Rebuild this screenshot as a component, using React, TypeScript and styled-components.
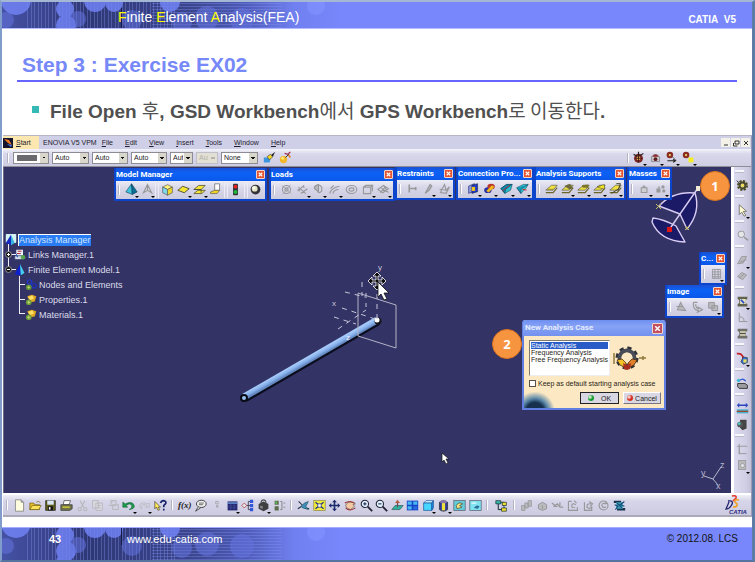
import React from "react";
import styled, { createGlobalStyle } from "styled-components";

const Global = createGlobalStyle`
  * { box-sizing: border-box; }
  html, body { margin: 0; padding: 0; }
  body { font-family: "Liberation Sans", Arial, sans-serif; background: #fff; }
  button, select, input { font: inherit; margin: 0; }
`;

/* ---------- icons ---------- */

const G = "#98979a";
const L = "#bab9be";

const gear = (c: string, hub: string) => (
  <g>
    <circle cx="8" cy="8" r="5.5" fill="none" stroke={c} strokeWidth="2.6" strokeDasharray="2.6 1.7" />
    <circle cx="8" cy="8" r="3.6" fill="none" stroke={c} strokeWidth="2.4" />
    <circle cx="8" cy="8" r="1.8" fill={hub} />
  </g>
);

const support = (extra: React.ReactNode) => (
  <g>
    <path d="M1 10 8 4h7l-5 6z" fill="#f0e040" stroke="#554" strokeWidth=".8" />
    <path d="M1 13h9l5-6" fill="none" stroke="#6b652a" strokeWidth="1.4" />
    {extra}
  </g>
);

const ICONS: Record<string, React.ReactNode> = {
  tetra: <g><path d="M8 1 1 11l8 3z" fill="#3cc4dc" stroke="#135" strokeWidth=".7" /><path d="M8 1l7 10-6 3z" fill="#0c6f93" stroke="#135" strokeWidth=".7" /></g>,
  tetraGray: <g fill="none" stroke={G} strokeWidth="1.4"><path d="M8 2 3 12l5-3 5 3z" fill="#dcdbe2" /><path d="M8 2v7" /></g>,
  cube: <g stroke="#555" strokeWidth=".8"><path d="M2 5l6-3 6 3-6 3z" fill="#fff27a" /><path d="M2 5v7l6 3V8z" fill="#7fd7e8" /><path d="M14 5v7l-6 3V8z" fill="#ecd52c" /></g>,
  sheet: <path d="M1 9l6-5 8 3-6 5z" fill="#f5e634" stroke="#443" strokeWidth="1.1" />,
  sheets: <g stroke="#443" strokeWidth=".9"><path d="M1 13l5-4 9 0-4 4z" fill="#f5e634" /><path d="M1 8l6-5h8l-5 5z" fill="#f5e634" /><path d="M1 8l9 0v4" fill="none" /></g>,
  copyProp: <g stroke="#555" strokeWidth=".8"><path d="M7 1h6v8H7z" fill="#fff" /><path d="M2 11l5-2h6l-3 4H2z" fill="#f2d222" /></g>,
  light: <g><rect x="5" y="1" width="6" height="14" rx="1" fill="#303038" /><circle cx="8" cy="4.5" r="2.4" fill="#e52323" /><circle cx="8" cy="11" r="2.4" fill="#21b83a" /></g>,
  ball: <g><circle cx="8" cy="8" r="6" fill="#33333a" /><circle cx="7" cy="7" r="3.6" fill="#e8e7c8" /><circle cx="6" cy="6" r="1.5" fill="#fff" /></g>,
  load1: <g fill="none" stroke={G} strokeWidth="1.3"><circle cx="8" cy="8" r="5" /><circle cx="8" cy="8" r="2" /><path d="M2 3l12 10M13 2 3 14" strokeWidth=".8" /></g>,
  load2: <g fill="none" stroke={G} strokeWidth="1.4"><path d="M2 10l8-7M6 13l8-6M3 5l9 8M2 8l3 2M9 3l1 3" /></g>,
  load3: <g stroke={G} strokeWidth="1.4"><path d="M3 5q5-5 9 0v5q-4 4-5 0z" fill="none" /><path d="M8 2q-5 1-5 5l5 3z" fill={L} /></g>,
  load4: <g fill="none" stroke={G} strokeWidth="1.4"><path d="M2 13Q4 6 14 4M6 13Q7 8 13 8M3 7l4-4" /></g>,
  load5: <g fill="none" stroke={G} strokeWidth="1.3"><ellipse cx="8" cy="8" rx="6.5" ry="5" /><ellipse cx="8" cy="8" rx="3" ry="2" /></g>,
  load6: <g fill="none" stroke={G} strokeWidth="1.4"><path d="M3 5h9v8H3zM3 5l3-2h8l-2 2M14 3v7" /></g>,
  load7: <g fill="none" stroke={G} strokeWidth="1.3"><path d="M1 8l7-5 6 4-7 5zM5 6l7 5M8 3l6 9M4 12l6-7" /></g>,
  clamp: <path d="M4 3v10M4 8h8M12 6v4" fill="none" stroke={G} strokeWidth="1.9" />,
  slider: <path d="M4 14l6-11 2 2-3 5z" fill={L} stroke={G} strokeWidth="1.5" />,
  iso: <path d="M3 13l5-10 2 7 4-4-4 8zM2 9l10 1" fill="none" stroke={G} strokeWidth="1.4" />,
  conn1: <g><path d="M2 5l7-3v9l-7 3z" fill="#8f9ad8" stroke="#1d2f7e" strokeWidth=".8" /><path d="M6 4l7-2v10l-7 2z" fill="#1d39c8" stroke="#112" strokeWidth=".6" /><path d="M6 6h4v5H6z" fill="#f3c31d" /></g>,
  conn2: <g><ellipse cx="6" cy="10" rx="4.5" ry="3.5" fill="#2430a4" /><ellipse cx="10" cy="5.5" rx="4.5" ry="3.5" fill="#b8342c" /><path d="M4 11l7-7 3 2-7 7z" fill="#f0b91d" /></g>,
  conn3: <g stroke="#145" strokeWidth=".7"><path d="M1 8l7-5h7l-2 7-7 4z" fill="#2bc4d4" /><path d="M1 8l5 6 1-5 8-6-7 0z" fill="#0f86ac" /><path d="M3 11l9-7" stroke="#c22" strokeWidth="1" /></g>,
  conn4: <g stroke="#145" strokeWidth=".7"><path d="M1 7l8-4h6l-3 5-6 6z" fill="#35cddc" /><path d="M1 7l5 7V9l9-6" fill="#159ab8" /><path d="M8 9l5 1" stroke="#c22" strokeWidth="1.200" /></g>,
  sup1: support(<path d="M3 9h8" stroke="#8a822c" />),
  sup2: support(<path d="M4 5l7-3 4 6-5 1z" fill="#6d6a3c" />),
  sup3: support(<path d="M6 4l8-1v4H7z" fill="#7d7426" />),
  sup4: support(<path d="M5 6l9-3v6z" fill="#f5ea22" stroke="#443" strokeWidth=".7" />),
  sup5: support(<path d="M9 2h5l-3 9M3 14l8-5" fill="none" stroke="#3d3a20" strokeWidth="1.1" />),
  mass: <g fill="#d0cfd4" stroke={G} strokeWidth="1.3"><path d="M4 7h7v6H4zM6 7q1-5 3 0" /></g>,
  massPts: <g fill={G}><path d="M3 8h5v5H3z" /><circle cx="11" cy="6" r="2" /><circle cx="12" cy="11" r="2" /><path d="M5 8q1-5 2 0" fill="none" stroke={G} /></g>,
  gridGray: <path d="M3 3h10v11H3zM3 6h10M3 9h10M3 12h10M6 3v11M10 3v11" fill="none" stroke={G} strokeWidth="1.1" />,
  img1: <path d="M3 12l4-9 2 4 4 6zM2 8h7" fill={L} stroke={G} strokeWidth="1.3" />,
  img2: <path d="M3 3h5M3 3q-1 9 6 10l-1 2 6-3-5-3v2Q5 9 6 5" fill="none" stroke={G} strokeWidth="1.4" />,
  img3: <path d="M2 3h7v7H2zM6 7h7v6H6z" fill={L} stroke={G} strokeWidth="1.2" />,
  brush: <g><path d="M1 8h9l-2 6H1z" fill="#3b96e0" /><path d="M5 7l4-3 3 3-4 4z" fill="#f0d528" stroke="#333" strokeWidth=".7" /><path d="M10 5l5-4-3 6z" fill="#222" /></g>,
  wizard: <g><circle cx="5.5" cy="10.5" r="4.5" fill="#f4b62a" /><circle cx="4.5" cy="9" r="1.7" fill="#fdf07c" /><path d="M7 3l4 1 3-3" fill="none" stroke="#a32c58" strokeWidth="1.5" /><path d="M11 4l3 4" stroke="#e0832a" strokeWidth="2" /><path d="M8 8l4-4" stroke="#333" strokeWidth="1.2" /></g>,
  calc1: <g><circle cx="8" cy="9" r="5.5" fill="#7c2424" /><path d="M2 4l5 3M14 3l-5 3M8 1v4" stroke="#222" strokeWidth="1.4" /><circle cx="8" cy="9" r="2.5" fill="#e8b04a" /><path d="M4 9h8M8 5v9" stroke="#301010" /></g>,
  calc2: <g><path d="M3 7q5-5 10 0v6H3z" fill="#c7c6cf" stroke="#666" strokeWidth=".7" /><path d="M4 7q4-6 8 0z" fill="#8c2a2a" /><circle cx="8" cy="10" r="2.3" fill="#5e1c1c" /></g>,
  calc3: <g><circle cx="6" cy="5" r="4" fill="#8a2b22" /><circle cx="6" cy="5" r="1.4" fill="#f3d265" /><path d="M3 12h9M10 10l3 2-3 2" stroke="#222" strokeWidth="1.4" fill="none" /><path d="M8 6l5 5" stroke="#555" /></g>,
  calc4: <g><circle cx="5" cy="5" r="4" fill="#8a2b22" /><circle cx="5" cy="5" r="1.4" fill="#f3d265" /><path d="M8 8h6v6H8z" fill="#f6ee25" /></g>,
  page: <path d="M3 1h7l3 3v11H3zM10 1v3h3" fill="#fffde0" stroke="#777" strokeWidth=".9" />,
  folder: <g stroke="#6b5a10" strokeWidth=".8"><path d="M1 5h5l1 2h6v6H1z" fill="#e8bb28" /><path d="M1 13l3-5h11l-3 5z" fill="#fbe25a" /><path d="M9 4q3-3 5 1" fill="none" /></g>,
  disk: <g><path d="M2 2h12v12H2z" fill="#5c5a1c" stroke="#222" strokeWidth=".8" /><rect x="4" y="2" width="8" height="5" fill="#d8e6f4" /><rect x="5" y="9" width="6" height="5" fill="#111" /><rect x="6" y="10" width="2" height="3" fill="#fff" /></g>,
  printer: <g stroke="#333" strokeWidth=".8"><path d="M5 2h8l-2 5H4z" fill="#fff" /><path d="M1 7h14v5l-3 2H1z" fill="#6f744c" /><path d="M3 10h9" stroke="#f1de35" strokeWidth="1.4" /></g>,
  cut: <g fill="none" stroke={L} strokeWidth="1.4"><path d="M5 2l5 9M11 2l-5 9" /><circle cx="4.5" cy="12.5" r="2" /><circle cx="11.5" cy="12.5" r="2" /></g>,
  copy: <path d="M2 2h7v9H2zM6 5h8v9H6zM8 8h4M8 11h4" fill="#dad9e1" stroke={L} strokeWidth="1.2" />,
  paste: <path d="M5 2h6v6H5zM2 8h7M7 7h7v6H7zM4 4h3" fill="none" stroke={L} strokeWidth="1.3" />,
  undo: <path d="M1 4v6h6l-2-2q5-4 7 0 1 3-3 5 7-1 6-5Q13 2 4 6z" fill="#1da04c" stroke="#0b5c35" strokeWidth=".7" />,
  redo: <path d="M14 5v5H9l2-2Q6 5 4 9l1 3Q0 10 3 6q4-3 9 0z" fill="none" stroke={L} strokeWidth="1" />,
  help: <g><path d="M1 3v9l2-2 2 4 2-1-2-3h3z" fill="#ffe95a" stroke="#222" strokeWidth=".7" /><path d="M8 5q1-3 4-3 4 1 2 4l-2 2v2M12 12v2" fill="none" stroke="#15216b" strokeWidth="2" /></g>,
  bubble: <g><ellipse cx="9" cy="6" rx="6" ry="4.5" fill="#eee" stroke="#333" strokeWidth="1.1" /><path d="M5 10l-3 5 6-4" fill="#eee" stroke="#333" /><path d="M6 5h6M6 7h5" stroke="#444" strokeWidth=".9" /></g>,
  dots: <path d="M7 3h3v3H7zM8 8h2v2H8z" fill="none" stroke={G} strokeWidth=".8" />,
  table: <g><rect x="2" y="3" width="12" height="11" fill="#20246e" /><path d="M2 5h12" stroke="#7eb1ee" strokeWidth="1.5" /><path d="M2 8.500h12M2 11h12M6 6v8M10 6v8" stroke="#5860a8" strokeWidth=".6" /></g>,
  relation: <g><path d="M5 8h4M9 3v10M9 3h3M9 8h3M9 13h3" stroke="#334" fill="none" /><path d="M1 8l3-3 3 3-3 3z" fill="#e8e4f0" stroke="#b0443c" /><path d="M11 1h4v4h-4zM11 6h4v4h-4zM11 11h4v4h-4z" fill="#3456d8" /></g>,
  lock: <g><path d="M2 6l6-3 6 3v6l-6 3-6-3z" fill="#3f3f42" /><path d="M5 5q0-4 3-4t3 4" fill="none" stroke="#555" strokeWidth="1.4" /><path d="M4 8l3 1v3l-3-1z" fill="#8b8b90" /></g>,
  rule: <g><path d="M2 2h5v5H2zM2 9h5v5H2z" fill="#5d6c4c" /><path d="M3 3h2v3H3z" fill="#5ac24f" /><path d="M9 3h2v10H9M13 5h2M13 10h2" fill="none" stroke="#777" /></g>,
  fly: <g><path d="M2 3l5 5 3 3 5 1M1 12l5-3" stroke="#234" strokeWidth="1.300" fill="none" /><path d="M5 9l4-4 5-2-3 6 3 4-7-2z" fill="#3f8fb8" stroke="#134" strokeWidth=".6" /></g>,
  fit: <g><rect x="1" y="2" width="14" height="12" fill="#f2ea3e" stroke="#7a7a20" strokeWidth=".7" /><path d="M3 4l10 8M13 4L3 12" stroke="#1c2f80" strokeWidth="1.4" /><rect x="6" y="6" width="4" height="4" fill="#fff" stroke="#1c2f80" strokeWidth=".8" /></g>,
  pan: <path d="M8 1l3 3H9v3h3V5l3 3-3 3V9H9v3h2l-3 3-3-3h2V9H4v2L1 8l3-3v2h3V4H5z" fill="#1b2a6e" />,
  rotate: <g><path d="M2 8q2-5 8-4l4 2-3 1 2 2-5 4q-4-1-5-3z" fill="#f6c9a5" stroke="#444" strokeWidth=".7" /><path d="M1 5q6-4 12 0M2 11q5 5 12 0" fill="none" stroke="#a03636" strokeWidth="1.3" /></g>,
  zoomIn: <g><circle cx="6" cy="6" r="4.500" fill="#dff4ff" stroke="#223" strokeWidth="1.3" /><path d="M9.500 9.500 15 15" stroke="#223" strokeWidth="2.2" /><path d="M4 6h4M6 4v4" stroke="#114" strokeWidth="1.2" /></g>,
  zoomOut: <g><circle cx="6" cy="6" r="4.500" fill="#dff4ff" stroke="#223" strokeWidth="1.3" /><path d="M9.500 9.500 15 15" stroke="#223" strokeWidth="2.2" /><path d="M4 6h4" stroke="#114" strokeWidth="1.2" /></g>,
  normal: <g><path d="M1 13l4-5h10l-4 5z" fill="#2cb1a0" stroke="#355" strokeWidth=".8" /><path d="M8 10V4" stroke="#6a4a55" strokeWidth="1.5" /><path d="M8 1l3 4H5z" fill="#b9573f" /></g>,
  multi: <g><rect x="1" y="2" width="14" height="12" fill="#1644c8" /><path d="M2 3h5v4H2zM9 3h5v4H9zM2 9h5v4H2z" fill="#48b8f0" /><path d="M9 9h5v4H9z" fill="#2a6be0" /></g>,
  isoView: <g stroke="#124b9a" strokeWidth=".8"><path d="M2 5l3-3h9l-2 3z" fill="#c9f5ff" /><path d="M2 5h10v9H2z" fill="#46d6ff" /><path d="M12 5l2-3v9l-2 3z" fill="#1a8fe0" /></g>,
  shade: <g><path d="M3 4q5-4 10 0v9q-5 4-10 0z" fill="#2a3a9a" stroke="#222" strokeWidth=".8" /><path d="M6 4h4v10H6z" fill="#f1e13c" /><ellipse cx="8" cy="3.500" rx="4.500" ry="1.800" fill="#87a" /></g>,
  hide: <g><rect x="1" y="2" width="14" height="12" fill="#63cbd8" stroke="#556" strokeWidth=".8" /><path d="M4 8q3-5 8-2l-4 2 3 2-6 2z" fill="#f2e37c" stroke="#443" strokeWidth=".8" /></g>,
  swap: <g><rect x="1" y="2" width="14" height="12" fill="#7ee3ee" stroke="#556" strokeWidth=".8" /><path d="M6 11q3-5 7-2l-2 3z" fill="#2b6e9a" /><path d="M3 5h6" stroke="#fff" strokeWidth="1.300" /></g>,
  tree: <g><path d="M1 2h6v4H1zM7 4h4v8h2" fill="#38b9a6" stroke="#123" strokeWidth=".8" /><path d="M9 4h5v4H9zM8 11h6v4H8z" fill="#f2e32a" stroke="#123" strokeWidth=".8" /><path d="M4 6v7h4" fill="none" stroke="#123" strokeWidth="1.200" /></g>,
  blocks: <path d="M2 8h4v6H2zM6 5h4v6H6zM10 2h4v7h-4z" fill={L} stroke={G} strokeWidth="1" />,
  house: <path d="M3 7l5-3 5 3v5l-5 2-5-2zM8 8v4" fill={L} stroke={G} strokeWidth="1.200" />,
  arrows: <path d="M1 5l4 3 3-2 3 4h4M11 4v5M3 9h5" fill="none" stroke={G} strokeWidth="1.400" />,
  cyc1: <g fill="none" stroke={G} strokeWidth="1.400"><path d="M3 3h4M3 3v11h11v-4M12 7q-5-3-5 2 1 3 4 1M10 2l3 3" /></g>,
  cyc2: <g fill="none" stroke={G} strokeWidth="1.400"><path d="M3 4v10h9V9M6 10q0-5 5-4M9 3l4 3-3 3M6 10q3 3 6 0" /></g>,
  cyc3: <g fill="none" stroke={G} strokeWidth="1.400"><circle cx="8" cy="8" r="5.500" /><path d="M11 6q-5-2-5 2 0 3 5 2M10 3l2 3" /></g>,
  spool: <g><path d="M1 2h9v3H1zM5 11h10v3H5z" fill="#17324d" /><path d="M4 4h8v8H4z" fill="#3fa1b8" /><path d="M2 7l4 2-3 4M14 3L9 7l5 2M5 5l6 6" stroke="#134a78" strokeWidth="1.400" fill="none" /></g>,
  gearY: <g>{gear("#4b4a25", "#f1dc37")}<path d="M1 2l4 4" stroke="#222" strokeWidth="1.200" /></g>,
  pointer: <path d="M4 1v12l3-3 3 5 2-1-3-5h4z" fill="#fffbd0" stroke="#666" strokeWidth="1" />,
  lensGray: <g fill="none" stroke={G}><circle cx="6.500" cy="6.500" r="4" fill="#e6e5ea" strokeWidth="1.200" /><path d="M10 10l5 4" strokeWidth="1.800" /></g>,
  rayGray: <path d="M2 12l5-9h6l-4 8zM5 10l8-3" fill={L} stroke={G} strokeWidth="1.100" />,
  bookGray: <path d="M2 8l5-5 6 3-5 6zM4 10l6-5" fill={L} stroke={G} strokeWidth="1.100" />,
  film: <g><path d="M2 2h12v3l-2 1v4l2 1v3H2v-3l2-1V6L2 5z" fill="#63624c" /><path d="M5 5h7v6H5z" fill="#e8e6c2" /><path d="M6 6l4 4" stroke="#2448c8" strokeWidth="2" /></g>,
  film2: <g><path d="M2 2h12v3l-2 1v4l2 1v3H2v-3l2-1V6L2 5z" fill="#706f68" /><path d="M5 5h7v6H5z" fill="#c9c6ae" /><path d="M5 8h7" stroke="#333" /></g>,
  cornerGray: <path d="M4 2v11h10M4 7q6 0 6 6" fill="none" stroke={G} strokeWidth="1.200" />,
  transfer: <g><path d="M1 2q7-1 8 6" fill="none" stroke="#c2232b" strokeWidth="2.200" /><path d="M9 6l5 1v6l-5 2-3-3z" fill="#2f6ad8" stroke="#222" strokeWidth=".7" /><path d="M9 9h4v4H9z" fill="#e7dd5a" /></g>,
  update: <g><path d="M3 6q4-6 9-1" fill="none" stroke="#2a50d0" strokeWidth="1.500" /><circle cx="3" cy="4" r="2" fill="#3ebcd0" /><path d="M2 8h9l3 2v4H4l-2-2z" fill="#9b9ba0" stroke="#222" strokeWidth="1" /></g>,
  measure: <g><path d="M1 4l3-3v2h8V1l3 3-3 3V5H4v2z" fill="#2a45c2" /><rect x="1" y="9" width="14" height="5" fill="#49b0cc" /><path d="M1 11.500h14" stroke="#a3452b" strokeWidth="1.500" /></g>,
  inertia: <g><path d="M5 2h8v11l-5 2-3-3z" fill="#444" /><circle cx="5" cy="8" r="3.500" fill="#555" /><circle cx="4" cy="7" r="1.700" fill="#4dc6c6" /></g>,
  axisGray: <path d="M4 1v13M1 4h13M4 4v9h9" fill="none" stroke={G} strokeWidth="1.100" />,
  sensorGray: <g><rect x="3" y="2" width="9" height="11" fill={L} stroke={G} /><circle cx="8" cy="8" r="2.500" fill="#e3e2e8" stroke={G} /></g>,
  manager: <g><rect x="1" y="0" width="14" height="12" rx="1" fill="#d8f2f2" /><path d="M8 1L1 12l7 3z" fill="#1429c4" /><path d="M8 1v14l5-3z" fill="#39b4dc" /></g>,
  links: <g><rect x="3" y="1" width="9" height="8" fill="#e9f0f6" /><path d="M5 3h5M4 6h5" stroke="#b02c3c" strokeWidth="1.500" /><path d="M1 9h10v5H1z" fill="#d6dde8" stroke="#236" strokeWidth=".8" /><circle cx="12" cy="11" r="3" fill="#58a94e" /><path d="M2 6l3 5" stroke="#2d58bc" strokeWidth="1.600" /></g>,
  fem: <g><path d="M8 0L1 14l8 1z" fill="#0e1fd0" /><path d="M8 0l1 15 5-3z" fill="#45d0f0" /></g>,
  nodes: <g><circle cx="6" cy="4" r="3" fill="none" stroke="#2037d0" strokeWidth="1.500" /><circle cx="12" cy="9" r="3" fill="none" stroke="#1c2fc8" strokeWidth="1.500" /><circle cx="5" cy="11" r="3.800" fill="#5b8f35" /><path d="M3 11h4M5 9v4" stroke="#d7e27e" /></g>,
  props: <g><path d="M3 3l6-2 6 2-2 7-6 1z" fill="#e0a820" /><path d="M4 4l6-2 2 4-5 2z" fill="#fbe064" /><circle cx="5" cy="11" r="3.800" fill="#6a9a3a" /><path d="M3 11h4M5 9v4" stroke="#dfe886" /></g>,
};

const Svg = styled.svg<{ $size: number }>`
  display: block;
  flex: none;
  width: ${(p) => p.$size}px;
  height: ${(p) => p.$size}px;
`;

const Icon = ({ name, size = 13 }: { name: string; size?: number }) => (
  <Svg $size={size} viewBox="0 0 16 16" aria-hidden="true">
    {ICONS[name]}
  </Svg>
);

const ToolButton = styled.button<{ $menu?: boolean }>`
  flex: 1 1 0;
  min-width: 0;
  height: 15px;
  padding: 0;
  border: 0;
  background: none;
  display: flex;
  align-items: center;
  justify-content: center;
  position: relative;
  color: #222;
  font: italic 700 9px/15px "Liberation Serif", serif;
  &::after {
    content: "";
    display: ${(p) => (p.$menu ? "block" : "none")};
    position: absolute;
    right: 0;
    bottom: -1px;
    border: 2px solid transparent;
    border-top-color: #000;
    border-bottom: 0;
  }
`;

const Tool = ({ id }: { id: string }) => {
  const menu = id.endsWith("+");
  const name = id.replace("+", "");
  return (
    <ToolButton type="button" $menu={menu} aria-label={name}>
      {name === "fx" ? "f(x)" : <Icon name={name} />}
    </ToolButton>
  );
};

/* ---------- slide ---------- */

const Slide = styled.div`
  min-height: 100vh;
  display: flex;
  flex-direction: column;
  background: #fff;
  border: solid;
  border-width: 2px 3px 2px 2px;
  border-color: #a4b8d6 #5d7ca6 #55749f #819ccb;
`;

const Header = styled.header`
  height: 27px;
  display: grid;
  grid-template-columns: 116px 1fr auto;
  align-items: center;
  padding-right: 16px;
  background: #7888fc;
  border-bottom: 1px solid #b4bcff;
  position: relative;
  color: #fff;
`;

const Art = styled.svg`
  position: absolute;
  left: 0;
  top: 0;
  width: 340px;
  height: 100%;
`;

const Course = styled.div`
  grid-column: 2;
  position: relative;
  font-size: 14px;
  line-height: 16px;
  padding-top: 4px;
  em { color: #ff0; font-style: normal; }
`;

const Product = styled.div`
  position: relative;
  font-size: 10px;
  font-weight: 700;
  line-height: 12px;
  padding-top: 10px;
`;

const Bands = ({ id, flip }: { id: string; flip?: boolean }) => (
  <Art viewBox="0 0 340 33" preserveAspectRatio="xMinYMin slice" aria-hidden="true">
    <defs>
      <linearGradient id={id}>
        <stop offset="0" stopColor="#4551a4" />
        <stop offset=".25" stopColor="#2f3876" />
        <stop offset=".55" stopColor="#3a458c" />
        <stop offset=".72" stopColor="#4f5cba" />
        <stop offset=".86" stopColor="#7080f0" />
        <stop offset="1" stopColor="#7888fc" />
      </linearGradient>
      <pattern id={id + "v"} width="7" height="33" patternUnits="userSpaceOnUse">
        <path d="M1.500 0v33M4.500 0v33" stroke="#8794f4" strokeOpacity=".35" />
      </pattern>
      <pattern id={id + "h"} width="8" height="3" patternUnits="userSpaceOnUse">
        <path d="M0 1.500h8" stroke="#8794f4" strokeOpacity=".35" />
      </pattern>
    </defs>
    <rect width="340" height="33" fill={`url(#${id})`} />
    <rect x="24" width="150" height="33" fill={`url(#${id}v)`} />
    <rect x="150" width="130" height="33" fill={`url(#${id}h)`} />
    <g fill="#7182f4" opacity=".85">
      <circle cx="14" cy={flip ? -5 : -2} r="15" />
      <circle cx="63" cy="7" r="9" />
      <circle cx="64" cy="23" r="10" />
      <circle cx="62" cy="34" r="8" />
      <circle cx="93" cy="-1" r="11" />
      <circle cx="112" cy="1" r="9" />
      <circle cx="168" cy="0" r="10" />
    </g>
    <g fill="#6574df" opacity=".55">
      <circle cx="76" cy="17" r="8" />
      <circle cx="4" cy="18" r="8" />
      <circle cx="130" cy="18" r="10" />
      <circle cx="180" cy="20" r="10" />
      <circle cx="205" cy="16" r="12" />
      <circle cx="240" cy="18" r="12" />
    </g>
    <circle cx="314" cy="4" r="9" fill="#8493ff" opacity=".6" />
    <path d={flip ? "M119.500 0v17" : "M119.500 6v20"} stroke="#151a48" />
  </Art>
);

const Lead = styled.section`
  padding: 23px 15px 9px;
  color: #505050;
`;

const Title = styled.h1`
  margin: 0;
  padding: 0 5px 3px;
  font-size: 21px;
  line-height: 25px;
  font-weight: 700;
  color: #7788f8;
  border-bottom: 2px solid #6666ff;
`;

const Points = styled.ul`
  list-style: none;
  margin: 0;
  padding: 18px 15px 0;
`;

const Point = styled.li`
  display: flex;
  gap: 11px;
  font-size: 19px;
  line-height: 24px;
  font-weight: 700;
  white-space: nowrap;
  height: 26px;
  &::before {
    content: "";
    width: 7px;
    height: 7px;
    margin-top: 6px;
    background: #35b9b4;
  }
`;

const Ko = styled.span`
  font-family: "Noto Sans CJK KR", sans-serif;
  font-weight: 400;
  line-height: 0;
`;

/* ---------- application window ---------- */

const Win = styled.section`
  flex: 1;
  display: flex;
  flex-direction: column;
  margin: 0 0 10px 1px;
  background: #d3d2e7;
  border-top: 1px solid #b8b6c4;
  border-bottom: 2px solid #aaa9b8;
  border-right: 1px solid #9c9bb4;
`;

const MenuBar = styled.nav`
  height: 13px;
  display: flex;
  align-items: center;
  gap: 12px;
  padding-right: 1px;
  background: #d0cfe8;
  font-size: 7px;
  line-height: 12px;
  color: #22222e;
`;

const StartItem = styled.button`
  display: flex;
  align-items: center;
  gap: 3px;
  width: 36px;
  height: 13px;
  padding: 0;
  margin-right: -8px;
  border: 0;
  background: #fde7b0;
  color: inherit;
`;

const MenuItem = styled.button<{ $plain?: boolean }>`
  border: 0;
  background: none;
  padding: 0;
  margin-right: ${(p) => (p.$plain ? "-7px" : "0")};
  color: inherit;
  white-space: nowrap;
  &::first-letter { text-decoration: ${(p) => (p.$plain ? "none" : "underline")}; }
`;

const WinControls = styled.div`
  margin-left: auto;
  display: flex;
  gap: 1px;
  button {
    width: 9px;
    height: 9px;
    padding: 0;
    border: 0;
    background: #f3f1e8;
    display: grid;
    place-items: center;
  }
`;

const PropBar = styled.div`
  height: 18px;
  display: flex;
  align-items: center;
  gap: 3px;
  padding: 0 54px 0 4px;
  background: linear-gradient(#f4f4fb, #d8d7eb 30%, #cecde1);
  border-bottom: 1px solid #8f8e98;
`;

const Spacer = styled.span`
  flex: 1;
`;

const Grip = styled.i<{ $row?: boolean }>`
  flex: none;
  width: ${(p) => (p.$row ? "9px" : "1px")};
  height: ${(p) => (p.$row ? "2px" : "10px")};
  background: ${(p) => (p.$row ? "#f6f6fb" : "#b3b1c2")};
  border-right: ${(p) => (p.$row ? "0" : "1px solid #fff")};
  border-bottom: ${(p) => (p.$row ? "1px solid #bbbaca" : "0")};
  box-sizing: content-box;
  margin-right: ${(p) => (p.$row ? "0" : "1px")};
`;

const Picker = styled.select<{ $w: number; $swatch?: boolean }>`
  appearance: none;
  width: ${(p) => p.$w}px;
  height: 12px;
  padding: 0 9px 0 2px;
  border: 1px solid #8d8c94;
  border-radius: 0;
  font-size: 7px;
  line-height: 9px;
  color: #222;
  background:
    linear-gradient(45deg, transparent 50%, #111 50%) right 4px top 4px / 2px 2px no-repeat,
    linear-gradient(-45deg, transparent 50%, #111 50%) right 2px top 4px / 2px 2px no-repeat,
    linear-gradient(#d9d6cc, #d9d6cc) right / 8px 100% no-repeat,
    ${(p) => (p.$swatch ? "linear-gradient(#6b6a6e, #6b6a6e) 3px 2px / 20px 6px no-repeat," : "")}
    linear-gradient(#fff, #fff);
  &:disabled {
    color: #b5b3a8;
    opacity: 1;
    border-color: #c0bec9;
    background:
      linear-gradient(#b5b3a8, #b5b3a8) right 2px center / 4px 2px no-repeat,
      linear-gradient(#e2dfd5, #e2dfd5);
  }
`;

const Group = styled.div<{ $w: number }>`
  display: flex;
  align-items: center;
  flex: none;
  width: ${(p) => p.$w}px;
`;

const Middle = styled.div`
  flex: 1;
  display: grid;
  grid-template-columns: 1fr 20px;
  min-height: 326px;
`;

const Viewport = styled.main`
  position: relative;
  overflow: hidden;
  background: #333366;
  border-left: 1px solid #6c6b86;
`;

const SideBar = styled.aside`
  display: flex;
  flex-direction: column;
  padding: 3px 1px 0;
  border-left: 3px solid #fff;
  background: linear-gradient(90deg, #dcdbef, #cfcee4 70%, #c2c1d8);
`;

const SideGroup = styled.div`
  display: flex;
  flex-direction: column;
  align-items: center;
  gap: 1px;
  padding-bottom: 2px;
  button { width: 15px; flex: none; }
  i { margin-bottom: 4px; align-self: flex-start; }
`;

const BottomBar = styled.div`
  height: 22px;
  display: flex;
  align-items: center;
  gap: 3px;
  padding: 0 3px;
  border-top: 2px solid #fff;
  background: linear-gradient(#f0f0f8, #d6d5e9 30%, #cccbdf);
`;

/* ---------- floating toolbars ---------- */

const Panel = styled.section<{ $x?: number; $r?: number; $y: number; $w: number }>`
  position: absolute;
  ${(p) => (p.$r !== undefined ? `right: ${p.$r}px;` : `left: ${p.$x}px;`)}
  top: ${(p) => p.$y}px;
  width: ${(p) => p.$w}px;
  border: 2px solid #0c45cc;
  border-top: 0;
  background: #d4d3e6;
`;

const PanelHead = styled.header`
  height: 13px;
  display: flex;
  align-items: center;
  justify-content: space-between;
  background: linear-gradient(#1a50d4, #0c62f6 40%, #0a58ea);
  color: #fff;
  h2 {
    margin: 0;
    font: 700 8px/12px Roboto, sans-serif;
    white-space: nowrap;
  }
`;

const Close = styled.button<{ $size: number; $bg: string }>`
  flex: none;
  width: ${(p) => p.$size}px;
  height: ${(p) => p.$size}px;
  padding: 0;
  border: 1px solid #f4d5cc;
  border-radius: 1px;
  background: ${(p) => p.$bg};
  display: grid;
  place-items: center;
  svg { display: block; width: 100%; height: 100%; }
`;

const CloseButton = ({ size = 9, bg = "#e4562f" }: { size?: number; bg?: string }) => (
  <Close type="button" $size={size} $bg={bg} aria-label="Close">
    <svg viewBox="0 0 8 8"><path d="M2 2l4 4M6 2L2 6" stroke="#fff" strokeWidth="1.300" /></svg>
  </Close>
);

const PanelBody = styled.div`
  height: 18px;
  display: flex;
  align-items: center;
  padding: 0 1px 1px 2px;
  background: linear-gradient(#ececf5, #d8d7e9 40%, #cdccde);
  i { margin-right: 3px; }
`;

const Divider = styled.span`
  flex: none;
  width: 4px;
  height: 16px;
  border-left: 1px solid #ecebf5;
  border-right: 1px solid #ecebf5;
`;

const PANELS = [
  { t: "Model Manager", x: 110, y: 1, w: 153, icons: "tetra+ tetraGray+ | cube sheet+ sheets+ copyProp | light | ball" },
  { t: "Loads", x: 265, y: 1, w: 126, icons: "load1 load2+ load3+ load4+ load5 load6+ load7+" },
  { t: "Restraints", x: 391, y: 0, w: 60, icons: "clamp slider+ iso+" },
  { t: "Connection Pro...", x: 452, y: 0, w: 78, icons: "conn1+ conn2+ conn3+ conn4+" },
  { t: "Analysis Supports", x: 530, y: 0, w: 92, icons: "sup1 sup2+ sup3+ sup4+ sup5+" },
  { t: "Masses", x: 623, y: 0, w: 45, icons: "mass+ massPts+" },
  { t: "C...", r: 4, y: 85, w: 28, icons: "gridGray+" },
  { t: "Image", r: 7, y: 118, w: 59, icons: "img1 img2 img3+" },
];

const ToolPanel = ({ p }: { p: (typeof PANELS)[number] }) => (
  <Panel $x={p.x} $r={p.r} $y={p.y} $w={p.w} aria-label={p.t}>
    <PanelHead><h2>{p.t}</h2><CloseButton /></PanelHead>
    <PanelBody>
      <Grip />
      {p.icons.split(" ").map((id, i) => (id === "|" ? <Divider key={i} /> : <Tool key={i} id={id} />))}
    </PanelBody>
  </Panel>
);

/* ---------- tree ---------- */

const Tree = styled.ul`
  position: absolute;
  left: 1px;
  top: 65px;
  margin: 0;
  padding: 0;
  list-style: none;
  font-size: 9px;
  line-height: 11px;
  color: #dcdcea;
`;

const Node = styled.li<{ $depth: number; $on?: boolean }>`
  height: 15px;
  display: flex;
  align-items: center;
  gap: 1px;
  padding-left: ${(p) => [0, 9, 20][p.$depth]}px;
  white-space: nowrap;
  span {
    background: ${(p) => (p.$on ? "#2a7cf4" : "none")};
    border: solid ${(p) => (p.$on ? "#fff" : "transparent")};
    border-width: 1px 0 0 1px;
    color: ${(p) => (p.$on ? "#cfe6ff" : "inherit")};
  }
`;

const TreeLines = styled.svg`
  position: absolute;
  left: 0;
  top: 0;
  width: 24px;
  height: 90px;
`;

const NODES = [
  { t: "Analysis Manager", d: 0, i: "manager" },
  { t: "Links Manager.1", d: 1, i: "links" },
  { t: "Finite Element Model.1", d: 1, i: "fem" },
  { t: "Nodes and Elements", d: 2, i: "nodes" },
  { t: "Properties.1", d: 2, i: "props" },
  { t: "Materials.1", d: 2, i: "props" },
];

/* ---------- 3D scene ---------- */

const SceneSvg = styled.svg<{ $right?: boolean; $bottom?: boolean }>`
  position: absolute;
  ${(p) => (p.$right ? "right: 0;" : "left: 0;")}
  ${(p) => (p.$bottom ? "bottom: 0;" : "top: 0;")}
  pointer-events: none;
  font-family: "Liberation Sans", sans-serif;
`;

const Model = () => (
  <SceneSvg width="460" height="310" viewBox="0 0 460 310" role="img" aria-label="Beam model">
    <defs>
      <linearGradient id="rod" gradientUnits="userSpaceOnUse" x1="303" y1="187" x2="307" y2="194">
        <stop offset="0" stopColor="#5f8fd8" />
        <stop offset=".35" stopColor="#a9cdfa" />
        <stop offset=".75" stopColor="#84aeea" />
        <stop offset="1" stopColor="#6488c0" />
      </linearGradient>
    </defs>
    <path d="M242 233L375 156" stroke="#0b0d1c" strokeWidth="4" />
    <path d="M240 230L373 153" stroke="url(#rod)" strokeWidth="7" />
    <circle cx="240" cy="231" r="3" fill="#9dc2ef" stroke="#080a14" strokeWidth="2" />
    <circle cx="374" cy="154" r="3.500" fill="#16161c" />
    <circle cx="373" cy="153" r="2.500" fill="#fff" />
    <path d="M354 126l38 12v43l-38-12z" fill="none" stroke="#b4b3c6" />
    <g stroke="#c6c5d8" fill="none" strokeDasharray="5 5">
      <path d="M373 152v-28M338 141l33 11M341 125l20 5M330 150l22 7M334 162l28-19" />
      <path d="M358 115v14M362 126v14" />
    </g>
    <text x="328" y="139" fontSize="8" fill="#c6c5d8">x</text>
    <text x="374" y="103" fontSize="8" fill="#c6c5d8">y</text>
    <text x="342" y="173" fontSize="8" fill="#f2f2fa">z</text>
    <path d="M373 105l4 4h-3v4h4v-3l4 4-4 4v-3h-4v4h3l-4 4-4-4h3v-4h-4v3l-4-4 4-4v3h4v-4h-3z" fill="#0b0b10" stroke="#fff" strokeWidth=".8" />
    <path d="M374 115v15l3-3 3 6 3-1-3-6h5z" fill="#fff" stroke="#111" strokeWidth=".8" />
    <path d="M438 286v9l2-2 2 4 2-1-2-4h3z" fill="#fff" stroke="#111" strokeWidth=".7" />
  </SceneSvg>
);

const Compass = () => (
  <SceneSvg $right width="90" height="84" viewBox="0 0 90 84" role="img" aria-label="Compass">
    <g fill="#1b1a66" stroke="#d9cdf4" strokeWidth="1.400" strokeLinejoin="round">
      <path d="M18 39Q32 24 54 26Q60 45 46 62L39 47z" />
      <path d="M12 51Q22 52 35 59L44 75Q19 74 11 55z" />
      <path d="M57 21L39 47L28 63" />
    </g>
    <path d="M26 60h5v5h-5z" fill="#e01515" />
    <path d="M55 19h4v5h-4z" fill="#f0ead8" />
    <path d="M15 37l5 5M20 37l-5 5M44 59l4 4M48 59l-4 4" stroke="#c9bf63" />
  </SceneSvg>
);

const Axis = () => (
  <SceneSvg $right $bottom width="36" height="36" viewBox="0 0 36 36" role="img" aria-label="Axis">
    <path d="M18 22L26 10M18 22L9 19M18 22l5 6" stroke="#b9b8cc" fill="none" />
    <text x="25" y="11" fontSize="9" fill="#b9b8cc">z</text>
    <text x="6" y="19" fontSize="9" fill="#b9b8cc">y</text>
    <text x="21" y="32" fontSize="9" fill="#b9b8cc">x</text>
  </SceneSvg>
);

const Badge = styled.b<{ $r: number; $y: number }>`
  position: absolute;
  right: ${(p) => p.$r}px;
  top: ${(p) => p.$y}px;
  width: 30px;
  height: 30px;
  border-radius: 50%;
  border: 1px solid #d87420;
  background: #f79440;
  color: #fff;
  font: 700 13px/28px "Open Sans", sans-serif;
  text-align: center;
`;

/* ---------- dialog ---------- */

const Dialog = styled.form`
  position: absolute;
  right: 65px;
  top: 153px;
  width: 144px;
  border: 2px solid #5f7ee0;
  border-top: 0;
  border-radius: 3px 3px 0 0;
  background: radial-gradient(circle at 11px 104%, #16304e 0 9px, #5a87a8 13px, transparent 20px), #fce8c2;
  font-size: 7px;
  line-height: 7px;
  color: #2a2620;
`;

const DialogHead = styled.header`
  height: 16px;
  display: flex;
  align-items: center;
  justify-content: space-between;
  padding: 0 2px;
  margin: 0 -1px;
  border-radius: 3px 3px 0 0;
  background: linear-gradient(#6f8ff0, #86a3f6 40%, #7391ee);
  color: #e4ebff;
  h2 { margin: 0; font: 700 8px/14px Roboto, sans-serif; }
`;

const DialogMain = styled.div`
  display: grid;
  grid-template-columns: 81px 1fr;
  align-items: start;
  gap: 3px;
  padding: 4px 5px 0;
`;

const List = styled.ul`
  margin: 0;
  padding: 1px;
  list-style: none;
  height: 36px;
  background: #fff;
  border: 1px solid #807a6e;
  border-right-color: #eee;
  border-bottom-color: #eee;
`;

const Option = styled.li<{ $on?: boolean }>`
  white-space: nowrap;
  height: 7px;
  background: ${(p) => (p.$on ? "#2a5cc8" : "none")};
  color: ${(p) => (p.$on ? "#fff" : "inherit")};
`;

const Check = styled.label`
  display: flex;
  align-items: center;
  gap: 2px;
  padding: 2px 5px 0;
  white-space: nowrap;
  height: 12px;
  input {
    appearance: none;
    width: 7px;
    height: 7px;
    border: 1px solid #55524c;
    background: #fff;
  }
`;

const Actions = styled.div`
  display: flex;
  justify-content: flex-end;
  gap: 4px;
  padding: 4px 3px;
`;

const Action = styled.button<{ $main?: boolean }>`
  display: flex;
  align-items: center;
  justify-content: center;
  gap: ${(p) => (p.$main ? 7 : 2)}px;
  width: ${(p) => (p.$main ? 39 : 38)}px;
  height: 12px;
  padding: 0;
  border: 1px solid;
  border-color: ${(p) => (p.$main ? "#222" : "#fff #77757f #77757f #fff")};
  background: #d9d7e4;
  color: #222;
`;

const Dot = styled.span<{ $c: string }>`
  width: 6px;
  height: 6px;
  border-radius: 50%;
  background: radial-gradient(circle at 2px 2px, #fff, ${(p) => p.$c} 50%);
`;

const BigGear = styled.svg`
  width: 34px;
  height: 26px;
  margin-top: 5px;
`;

const AnalysisDialog = () => (
  <Dialog onSubmit={(e) => e.preventDefault()} role="dialog" aria-label="New Analysis Case">
    <DialogHead><h2>New Analysis Case</h2><CloseButton size={11} bg="#c0505e" /></DialogHead>
    <DialogMain>
      <List role="listbox" aria-label="Analysis type">
        <Option role="option" aria-selected="true" $on>Static Analysis</Option>
        <Option role="option" aria-selected="false">Frequency Analysis</Option>
        <Option role="option" aria-selected="false">Free Frequency Analysis</Option>
      </List>
      <BigGear viewBox="0 0 34 26" aria-hidden="true">
        <path d="M1 8v11M26 13h7M30 11v4" stroke="#8f7a3e" strokeWidth="1.500" />
        <circle cx="14" cy="13" r="9.500" fill="none" stroke="#2f3138" strokeWidth="4" strokeDasharray="4 3.460" />
        <circle cx="14" cy="13" r="7.500" fill="none" stroke="#484c56" strokeWidth="4" />
        <circle cx="14" cy="13" r="5.500" fill="#fce8c2" />
        <path d="M4 15l3 5 6 3v-5l-4-4z" fill="#f3c229" stroke="#4a2c10" strokeWidth=".8" />
        <path d="M24 15l-3 5-6 3v-5l4-4z" fill="#e0812a" stroke="#4a2c10" strokeWidth=".8" />
        <path d="M10 18l4 2 4-2-1 6-3 1-3-1z" fill="#a92e20" />
      </BigGear>
    </DialogMain>
    <Check><input type="checkbox" />Keep as default starting analysis case</Check>
    <Actions>
      <Action type="submit" $main><Dot $c="#129b2c" />OK</Action>
      <Action type="button"><Dot $c="#d42a1c" />Cancel</Action>
    </Actions>
  </Dialog>
);

const Logo = styled.svg`
  flex: none;
  margin-left: auto;
  width: 24px;
  height: 20px;
  font-family: "Liberation Sans", sans-serif;
`;

const Footer = styled.footer`
  position: relative;
  height: 33px;
  display: grid;
  grid-template-columns: 47px 78px 1fr auto;
  align-items: center;
  padding: 0 14px 10px 0;
  background: #7888fc;
  border-top: 1px solid #a2adff;
  color: #fff;
  font-size: 11px;
  line-height: 14px;
  b { grid-column: 2; position: relative; }
  a { position: relative; color: #fff; text-decoration: none; }
  small { font-size: 10px; color: #111; position: relative; }
`;

const BOTTOM: [number, string][] = [
  [156, "page folder disk printer cut copy paste undo+ redo+ help"],
  [110, "fx bubble dots table+ relation lock+ rule"],
  [187, "fly fit pan rotate zoomIn zoomOut normal multi isoView+ shade+ hide swap"],
  [18, "tree"],
  [108, "blocks house arrows cyc1 cyc2 cyc3 spool"],
];

const SIDE = ["gearY", "pointer+", "lensGray", "rayGray+ bookGray", "film+ cornerGray film2", "transfer+", "update", "measure inertia", "axisGray sensorGray+"];

const PICKERS = [
  { w: 36, t: "", label: "Colour" },
  { w: 37, t: "Auto", label: "Transparency" },
  { w: 36, t: "Auto", label: "Line weight" },
  { w: 36, t: "Auto", label: "Line type" },
  { w: 23, t: "Aut", label: "Point symbol" },
  { w: 22, t: "Aut", label: "Rendering", off: true },
  { w: 37, t: "None", label: "Layer" },
];

export default function App() {
  return (
    <>
      <Global />
      <Slide>
        <Header>
          <Bands id="top" />
          <Course><em>F</em>inite <em>E</em>lement <em>A</em>nalysis(FEA)</Course>
          <Product>CATIA&nbsp; V5</Product>
        </Header>
        <Lead>
          <Title>Step 3 : Exercise EX02</Title>
          <Points>
            <Point>
              <span>
                File Open <Ko>후</Ko>, GSD Workbench<Ko>에서</Ko> GPS Workbench<Ko>로 이동한다</Ko>.
              </span>
            </Point>
          </Points>
        </Lead>
        <Win>
          <MenuBar>
            <StartItem type="button">
              <Svg $size={10} viewBox="0 0 10 10" aria-hidden="true">
                <rect width="10" height="10" fill="#14142c" />
                <path d="M1 1l5 1 3 5-4-2z" fill="#f07a24" />
                <path d="M4 6l5 1-1 2z" fill="#4a76e0" />
              </Svg>
              <MenuItem as="span">Start</MenuItem>
            </StartItem>
            {["ENOVIA V5 VPM", "File", "Edit", "View", "Insert", "Tools", "Window", "Help"].map((m, i) => (
              <MenuItem key={m} type="button" $plain={i === 0}>{m}</MenuItem>
            ))}
            <WinControls>
              {["M2 6h4", "M3 2h4v3H3zM1.500 4v3h4", "M2 2l4 4M6 2L2 6"].map((d, i) => (
                <button key={d} type="button" aria-label={["Minimize", "Restore", "Close"][i]}>
                  <Svg $size={8} viewBox="0 0 8 8"><path d={d} fill="none" stroke="#333" /></Svg>
                </button>
              ))}
            </WinControls>
          </MenuBar>
          <PropBar>
            <Grip />
            {PICKERS.map((p) => (
              <Picker key={p.label} $w={p.w} $swatch={!p.t} disabled={p.off} aria-label={p.label}>
                <option>{p.t}</option>
              </Picker>
            ))}
            <Group $w={32}><Tool id="brush" /><Tool id="wizard" /></Group>
            <Spacer />
            <Group $w={70}>
              <Grip />
              <Tool id="calc1+" /><Tool id="calc2+" /><Tool id="calc3+" /><Tool id="calc4+" />
            </Group>
          </PropBar>
          <Middle>
            <Viewport>
              <Model />
              <Compass />
              <Axis />
              <Tree>
                <TreeLines viewBox="0 0 24 90" aria-hidden="true">
                  <path d="M3.500 12v26M3 22.500h8M3 37.500h8M14.500 44v38M14 52.500h6M14 67.500h6M14 81.500h6" stroke="#eeeef6" fill="none" />
                  <circle cx="3.500" cy="22.500" r="3" fill="#111" stroke="#bbb" strokeWidth=".7" />
                  <circle cx="3.500" cy="37.500" r="3" fill="#111" stroke="#bbb" strokeWidth=".7" />
                  <path d="M2 22.500h3M3.500 21v3M2 37.500h3" stroke="#fff" />
                </TreeLines>
                {NODES.map((n) => (
                  <Node key={n.t} $depth={n.d} $on={n.d === 0}><Icon name={n.i} size={12} /><span>{n.t}</span></Node>
                ))}
              </Tree>
              {PANELS.map((p) => <ToolPanel key={p.t} p={p} />)}
              <AnalysisDialog />
              <Badge $r={1} $y={4}>1</Badge>
              <Badge $r={209} $y={162}>2</Badge>
            </Viewport>
            <SideBar>
              {SIDE.map((g) => (
                <SideGroup key={g}>
                  <Grip $row />
                  {g.split(" ").map((id) => <Tool key={id} id={id} />)}
                </SideGroup>
              ))}
            </SideBar>
          </Middle>
          <BottomBar>
            {BOTTOM.map(([w, ids]) => (
              <React.Fragment key={ids}>
                <Grip />
                <Group $w={w}>{ids.split(" ").map((id) => <Tool key={id} id={id} />)}</Group>
              </React.Fragment>
            ))}
            <Logo viewBox="0 0 24 20" role="img" aria-label="Dassault Systèmes CATIA">
              <path d="M8 1q5-1 4 2l-3 3" fill="none" stroke="#e0392c" strokeWidth="1.500" />
              <path d="M4 6q7-1 3 5-2 3-5 3l3-7" fill="none" stroke="#23246e" strokeWidth="1.300" />
              <path d="M15 5q-5-1-4 2l2 2q1 3-4 3" fill="none" stroke="#efa024" strokeWidth="1.600" />
              <text x="5" y="19" fontSize="6" fontWeight="700" fontStyle="italic" fill="#2b2c84">CATIA</text>
            </Logo>
          </BottomBar>
        </Win>
        <Footer>
          <Bands id="bottom" flip />
          <b>43</b>
          <a href="#home">www.edu-catia.com</a>
          <small>© 2012.08. LCS</small>
        </Footer>
      </Slide>
    </>
  );
}
